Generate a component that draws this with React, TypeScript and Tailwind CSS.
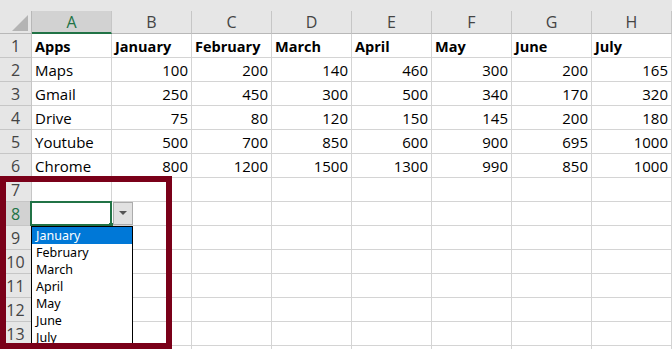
import React from "react";

const cols = ["A", "B", "C", "D", "E", "F", "G", "H"];
const data: (string | number)[][] = [
  ["Apps", "January", "February", "March", "April", "May", "June", "July"],
  ["Maps", 100, 200, 140, 460, 300, 200, 165],
  ["Gmail", 250, 450, 300, 500, 340, 170, 320],
  ["Drive", 75, 80, 120, 150, 145, 200, 180],
  ["Youtube", 500, 700, 850, 600, 900, 695, 1000],
  ["Chrome", 800, 1200, 1500, 1300, 990, 850, 1000],
];
const months = ["January", "February", "March", "April", "May", "June", "July"];

export default function App() {
  const rows = Array.from({ length: 14 }, (_, i) => i + 1);
  return (
    <div
      className="relative w-[672px] h-[349px] overflow-hidden bg-white text-black"
      style={{ fontFamily: '"Open Sans", "Noto Sans", sans-serif' }}
    >
      <div className="h-[11px] bg-[#e6e6e6]" />
      {/* column header */}
      <div className="flex h-[23px] bg-[#e6e6e6]">
        <div className="relative w-[32px] shrink-0 border-r border-b border-[#b8b8b8]">
          <svg className="absolute left-0 top-0" width="31" height="22" viewBox="0 0 31 22">
            <polygon points="28,4 28,20 12,20" fill="#b4b4b4" />
          </svg>
        </div>
        {cols.map((c, i) => (
          <div
            key={c}
            className={
              "w-[80px] shrink-0 flex items-center justify-center border-r border-[#c6c6c6] text-[16px] " +
              (i === 0
                ? "bg-[#d2d2d2] text-[#217346] border-b-2 border-b-[#217346]"
                : "text-[#444] border-b border-b-[#b8b8b8]")
            }
          >
            {c}
          </div>
        ))}
      </div>
      {rows.map((r) => (
        <div key={r} className="flex h-[24px]">
          <div
            className={
              "w-[32px] shrink-0 flex items-center justify-center pt-[1px] border-r border-b border-[#c6c6c6] text-[16px] " +
              (r === 8 ? "bg-[#d2d2d2] text-[#217346]" : "bg-[#e6e6e6] text-[#444]")
            }
          >
            {r}
          </div>
          {cols.map((c, ci) => {
            const v = data[r - 1]?.[ci];
            const isNum = typeof v === "number";
            return (
              <div
                key={c}
                className={
                  "w-[80px] shrink-0 flex items-center pt-[2px] border-r border-b border-[#d4d4d4] whitespace-nowrap overflow-visible " +
                  (isNum ? "justify-end pr-[3px]" : "pl-[3px]") +
                  (r === 1 ? " font-bold text-[14.5px]" : " text-[15px]")
                }
              >
                {v !== undefined ? String(v) : ""}
              </div>
            );
          })}
        </div>
      ))}

      {/* selected cell A8 */}
      <div className="absolute left-[30px] top-[201px] w-[82px] h-[25px] border-2 border-[#217346]" />
      <div className="absolute left-[109px] top-[223px] w-[4px] h-[4px] bg-[#217346]" />
      {/* dropdown button */}
      <div className="absolute left-[113px] top-[202px] w-[20px] h-[23px] bg-[#e1e1e1] border border-[#acacac] flex items-center justify-center">
        <svg width="8" height="5" viewBox="0 0 8 5">
          <polygon points="0,0 8,0 4,4" fill="#555" />
        </svg>
      </div>
      {/* list */}
      <div
        className="absolute left-[31px] top-[226px] w-[102px] h-[130px] bg-white border border-black text-[12.5px] leading-[17px]"
        style={{ fontFamily: '"Noto Sans", "Liberation Sans", sans-serif' }}
      >
        {months.map((m, i) => (
          <div
            key={m}
            className={"h-[17px] pl-[4px] " + (i === 0 ? "bg-[#0078d7] text-white" : "text-black")}
          >
            {m}
          </div>
        ))}
      </div>
      {/* red highlight box */}
      <div className="absolute left-0 top-[176px] w-[172px] h-[173px] border-[6px] border-[#7a0019]" />
    </div>
  );
}
